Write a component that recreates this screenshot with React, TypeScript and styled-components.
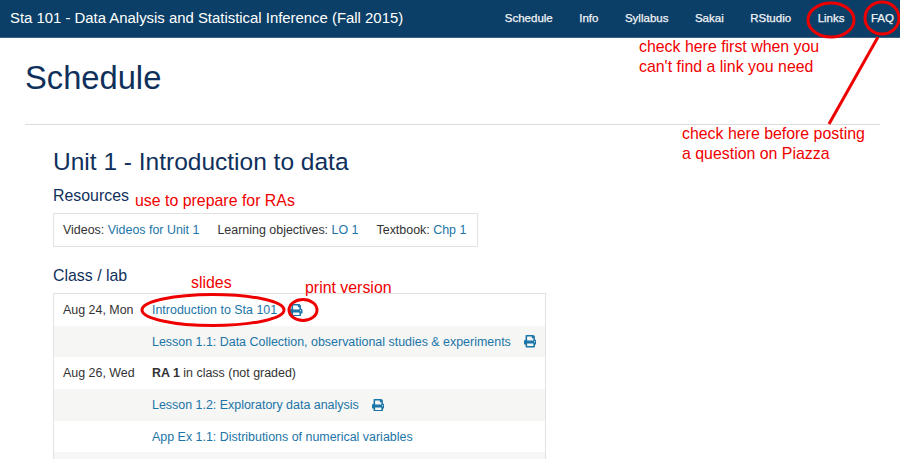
import * as React from 'react';
import styled, { createGlobalStyle } from 'styled-components';
import { FaPrint } from 'react-icons/fa';

const GlobalStyle = createGlobalStyle`
  html, body {
    margin: 0;
    padding: 0;
    height: 459px;
    overflow: hidden;
    background: #fff;
    font-family: "Liberation Sans", Arial, sans-serif;
    color: #222;
  }
`;

const Page = styled.div`
  position: relative;
  width: 900px;
  height: 459px;
  overflow: hidden;
`;

const NavBar = styled.header`
  display: flex;
  align-items: center;
  justify-content: space-between;
  box-sizing: border-box;
  height: 38px;
  padding: 0 6px 1px 10px;
  background: #0c3f67;
  border-bottom: 1px solid #3b5f85;
  color: #fff;
`;

const Brand = styled.div`
  font-size: 14.9px;
`;

const NavLinks = styled.nav`
  display: flex;
  gap: 26.5px;
  font-size: 11.5px;
  -webkit-text-stroke: 0.25px #f1f4f7;
`;

const NavLink = styled.a`
  color: #f1f4f7;
`;

const Content = styled.main`
  padding: 0 0 0 25px;
  width: 855px;
`;

const PageTitle = styled.h1`
  margin: 20px 0 0;
  height: 66px;
  font-size: 32.7px;
  line-height: 40px;
  font-weight: 400;
  color: #10305c;
`;

const Rule = styled.hr`
  margin: 0;
  border: 0;
  border-top: 1px solid #dcdcdc;
`;

const Unit = styled.section`
  padding: 24px 0 0 28px;
`;

const UnitTitle = styled.h2`
  margin: 0;
  font-size: 24.5px;
  line-height: 26px;
  font-weight: 400;
  color: #10305c;
`;

const SectionTitle = styled.h3<{ $top: number }>`
  margin: ${p => p.$top}px 0 0;
  font-size: 15.9px;
  line-height: 18px;
  font-weight: 400;
  color: #10305c;
`;

const ResourceBox = styled.div`
  display: flex;
  gap: 18px;
  box-sizing: border-box;
  width: 425px;
  height: 34px;
  margin-top: 8px;
  padding: 0 8px 0 9px;
  align-items: center;
  border: 1px solid #e2e2e2;
  font-size: 12.45px;
  color: #333;
`;

const Link = styled.a`
  color: #1b75a8;
`;

const Table = styled.div`
  box-sizing: border-box;
  width: 493px;
  margin-top: 8px;
  border: 1px solid #e2e2e2;
  border-bottom: 0;
`;

const Row = styled.div<{ $shaded?: boolean }>`
  display: flex;
  align-items: center;
  height: 31.7px;
  font-size: 12.45px;
  background: ${p => (p.$shaded ? '#f6f6f4' : '#fff')};
`;

const DateCell = styled.div`
  flex: 0 0 98px;
  box-sizing: border-box;
  padding-left: 9px;
  color: #333;
`;

const TopicCell = styled.div`
  display: flex;
  align-items: center;
  gap: 13px;
  color: #333;
`;

const Print = styled(FaPrint)`
  width: 12.5px;
  height: 12.5px;
  color: #1b75a8;
`;

const Note = styled.div<{ $x: number; $y: number }>`
  position: absolute;
  left: ${p => p.$x}px;
  top: ${p => p.$y}px;
  font-size: 15.9px;
  line-height: 20px;
  white-space: nowrap;
  color: #f00000;
`;

const Marks = styled.svg`
  position: absolute;
  left: 0;
  top: 0;
  pointer-events: none;
`;

const App = () => (
  <Page>
    <GlobalStyle />
    <NavBar>
      <Brand>Sta 101 - Data Analysis and Statistical Inference (Fall 2015)</Brand>
      <NavLinks>
        <NavLink>Schedule</NavLink>
        <NavLink>Info</NavLink>
        <NavLink>Syllabus</NavLink>
        <NavLink>Sakai</NavLink>
        <NavLink>RStudio</NavLink>
        <NavLink>Links</NavLink>
        <NavLink>FAQ</NavLink>
      </NavLinks>
    </NavBar>
    <Content>
      <PageTitle>Schedule</PageTitle>
      <Rule />
      <Unit>
        <UnitTitle>Unit 1 - Introduction to data</UnitTitle>
        <SectionTitle $top={12}>Resources</SectionTitle>
        <ResourceBox>
          <span>Videos: <Link>Videos for Unit 1</Link></span>
          <span>Learning objectives: <Link>LO 1</Link></span>
          <span>Textbook: <Link>Chp 1</Link></span>
        </ResourceBox>
        <SectionTitle $top={20}>Class / lab</SectionTitle>
        <Table>
          <Row>
            <DateCell>Aug 24, Mon</DateCell>
            <TopicCell><Link>Introduction to Sta 101</Link><Print /></TopicCell>
          </Row>
          <Row $shaded>
            <DateCell />
            <TopicCell>
              <Link>Lesson 1.1: Data Collection, observational studies &amp; experiments</Link>
              <Print />
            </TopicCell>
          </Row>
          <Row>
            <DateCell>Aug 26, Wed</DateCell>
            <TopicCell><span><b>RA 1</b> in class (not graded)</span></TopicCell>
          </Row>
          <Row $shaded>
            <DateCell />
            <TopicCell><Link>Lesson 1.2: Exploratory data analysis</Link><Print /></TopicCell>
          </Row>
          <Row>
            <DateCell />
            <TopicCell><Link>App Ex 1.1: Distributions of numerical variables</Link></TopicCell>
          </Row>
          <Row $shaded />
        </Table>
      </Unit>
    </Content>

    <Marks width="900" height="459" viewBox="0 0 900 459" fill="none" stroke="#ee0000" strokeWidth="3">
      <ellipse cx="831" cy="20" rx="23" ry="17" />
      <ellipse cx="882" cy="18" rx="17" ry="16" />
      <path d="M878 37 L829 124" />
      <ellipse cx="213" cy="310" rx="71" ry="15.5" />
      <ellipse cx="303" cy="310" rx="14" ry="10.5" />
    </Marks>
    <Note $x={639} $y={37}>check here first when you<br />can't find a link you need</Note>
    <Note $x={682} $y={124}>check here before posting<br />a question on Piazza</Note>
    <Note $x={135} $y={191}>use to prepare for RAs</Note>
    <Note $x={191} $y={273}>slides</Note>
    <Note $x={305} $y={278}>print version</Note>
  </Page>
);

export default App;
